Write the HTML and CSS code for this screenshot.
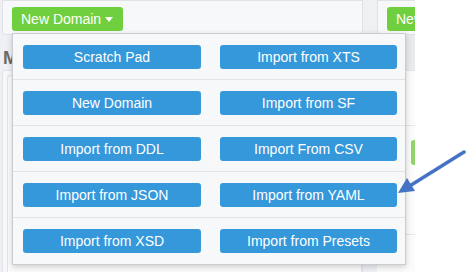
FILE: index.html
```html
<!DOCTYPE html>
<html>
<head>
<meta charset="utf-8">
<link rel="stylesheet" href="styles.css">
</head>
<body>
<div class="page">
  <div class="left">
    <div class="topbar">
      <button class="btn-green">New Domain <span class="caret"></span></button>
    </div>
    <div class="heading">M</div>
    <div class="card"><div class="inner"></div></div>
  </div>
  <div class="gutter"></div>
  <div class="right">
    <div class="topbar rtop">
      <button class="btn-green">New</button>
    </div>
    <div class="rband"></div>
    <div class="rcard">
      <div class="rrow"></div>
      <div class="rrow green-row"><span class="gbtn"></span></div>
      <div class="rrow"></div>
    </div>
  </div>
  <div class="blank"></div>
</div>

<div class="dropdown">
  <div class="row"><button class="btn-blue">Scratch Pad</button><button class="btn-blue">Import from XTS</button></div>
  <div class="row"><button class="btn-blue">New Domain</button><button class="btn-blue">Import from SF</button></div>
  <div class="row"><button class="btn-blue">Import from DDL</button><button class="btn-blue">Import From CSV</button></div>
  <div class="row"><button class="btn-blue">Import from JSON</button><button class="btn-blue">Import from YAML</button></div>
  <div class="row"><button class="btn-blue">Import from XSD</button><button class="btn-blue">Import from Presets</button></div>
</div>

<svg class="arrow" width="466" height="272" viewBox="0 0 466 272">
  <line x1="464" y1="152" x2="408" y2="187" stroke="#4472c4" stroke-width="3.5" stroke-linecap="round"/>
  <polygon points="398,193 407,178 415,191" fill="#4472c4"/>
</svg>
</body>
</html>
```
FILE: styles.css
```css
html, body {
  margin: 0;
  padding: 0;
}
body {
  width: 466px;
  height: 272px;
  overflow: hidden;
  position: relative;
  background: #ffffff;
  font-family: "Liberation Sans", Arial, sans-serif;
}
.page {
  display: flex;
  height: 272px;
  background: #eef0f3;
}
.left {
  width: 361px;
  margin-left: 2px;
  display: flex;
  flex-direction: column;
}
.topbar {
  flex-shrink: 0;
  height: 35px;
  background: #f7f8fa;
  border: 1px solid #dfe2e6;
  border-radius: 0 0 3px 3px;
  padding: 6px 0 0 9px;
  box-sizing: border-box;
}
.btn-green {
  height: 24px;
  border: none;
  border-radius: 3px;
  background: #70cf3f;
  color: #ffffff;
  font-family: "Liberation Sans", Arial, sans-serif;
  font-size: 14px;
  padding: 0 10px 0 9px;
  display: flex;
  align-items: center;
  gap: 4px;
}
.caret {
  width: 0;
  height: 0;
  border-left: 4.5px solid transparent;
  border-right: 4.5px solid transparent;
  border-top: 5px solid #ffffff;
  margin-top: 1px;
}
.heading {
  flex-shrink: 0;
  margin: 12px 0 0 1px;
  font-size: 18px;
  font-weight: bold;
  color: #6e6a66;
  height: 23px;
  line-height: 23px;
}
.card {
  flex: 1;
  min-height: 0;
  border: 1px solid #e2e4e7;
  border-bottom: none;
  background: #f7f8fa;
  border-radius: 3px 3px 0 0;
  padding: 4px 0 0 4px;
}
.inner {
  height: 100%;
  border: 1px solid #e2e4e7;
  border-bottom: none;
  border-radius: 4px 0 0 0;
  background: #fbfbfc;
}
.gutter {
  width: 14px;
}
.right {
  width: 38px;
  display: flex;
  flex-direction: column;
  overflow: hidden;
}
.rtop {
  border-right: none;
  padding-left: 9px;
  border-radius: 0 0 0 3px;
}
.rtop .btn-green {
  width: 60px;
}
.rband {
  flex-shrink: 0;
  height: 35px;
  background: #e8eaed;
}
.rcard {
  flex: 1;
  min-height: 0;
  overflow: hidden;
  background: #fbfbfc;
  border-top: 1px solid #e2e4e7;
}
.rrow {
  height: 54px;
  border-bottom: 1px solid #e2e4e7;
}
.green-row {
  height: 109px;
  padding-top: 14px;
  box-sizing: border-box;
}
.gbtn {
  display: block;
  margin-left: 34px;
  width: 20px;
  height: 25px;
  background: #8fd46a;
  border-radius: 3px;
}
.blank {
  flex: 1;
  background: #ffffff;
}
.dropdown {
  position: absolute;
  left: 12px;
  top: 33px;
  width: 392px;
  background: #f7f8fa;
  border: 1px solid #c9ccd1;
  box-shadow: 0 2px 6px rgba(0, 0, 0, 0.18);
  padding-bottom: 1px;
}
.row {
  display: grid;
  grid-template-columns: 178px 177px;
  column-gap: 19px;
  padding: 11px 8px 10px 10px;
  border-bottom: 1px solid #e1e3e6;
}
.row:last-child {
  border-bottom: none;
}
.btn-blue {
  height: 24px;
  border: none;
  border-radius: 3px;
  background: #3598db;
  color: #ffffff;
  font-family: "Liberation Sans", Arial, sans-serif;
  font-size: 14px;
  padding: 0;
  line-height: 24px;
}
.arrow {
  position: absolute;
  left: 0;
  top: 0;
}
```
